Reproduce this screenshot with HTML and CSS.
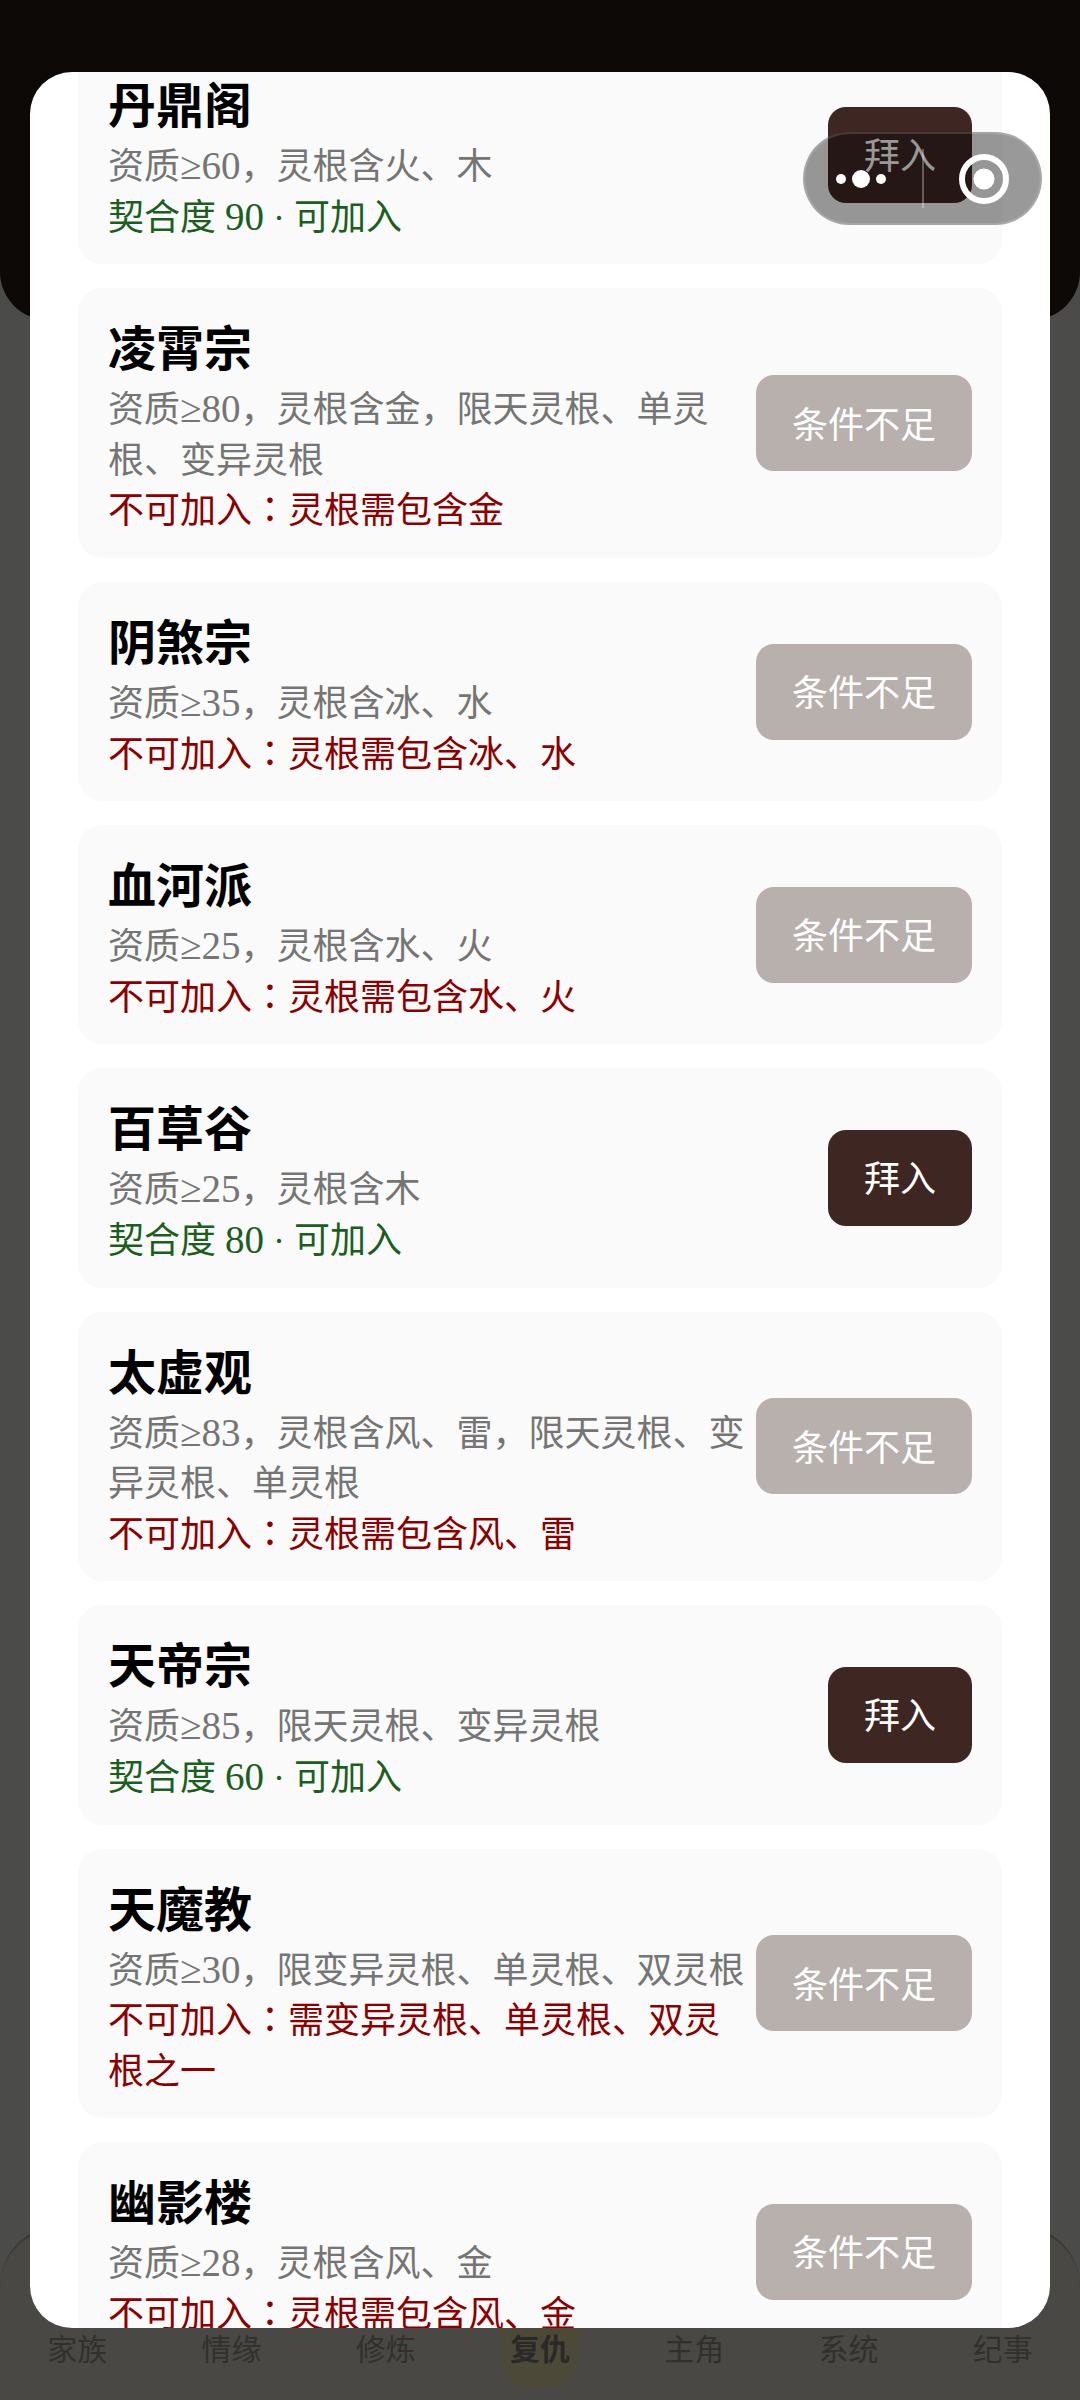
FILE: index.html
```html
<!DOCTYPE html>
<html lang="zh-CN">
<head>
    <meta charset="UTF-8">
    <meta name="viewport" content="width=device-width, initial-scale=1.0">
    <title>拜入宗门</title>
    <link rel="stylesheet" href="styles.css">
</head>
<body>

<div class="app">
    <!-- Top banner behind the dialog -->
    <div class="banner"></div>

    <!-- Bottom tabs behind the dialog -->
    <nav class="tabs">
        <span class="tab">家族</span>
        <span class="tab">情缘</span>
        <span class="tab">修炼</span>
        <span class="tab active">复仇</span>
        <span class="tab">主角</span>
        <span class="tab">系统</span>
        <span class="tab">纪事</span>
    </nav>
</div>

<!-- Sect dialog -->
<div class="scrim">
    <div class="dialog">
        <div class="sect-list">
            <div class="sect">
                <div class="sect-info">
                    <div class="sect-name">丹鼎阁</div>
                    <div class="sect-req">资质<span class="num">≥60</span>，灵根含火、木</div>
                    <div class="sect-status ok">契合度 <span class="num">90</span> · 可加入</div>
                </div>
                <button class="join-btn">拜入</button>
            </div>
            <div class="sect">
                <div class="sect-info">
                    <div class="sect-name">凌霄宗</div>
                    <div class="sect-req">资质<span class="num">≥80</span>，灵根含金，限天灵根、单灵根、变异灵根</div>
                    <div class="sect-status no">不可加入<span class="colon" lang="zh-TW">：</span>灵根需包含金</div>
                </div>
                <button class="join-btn disabled">条件不足</button>
            </div>
            <div class="sect">
                <div class="sect-info">
                    <div class="sect-name">阴煞宗</div>
                    <div class="sect-req">资质<span class="num">≥35</span>，灵根含冰、水</div>
                    <div class="sect-status no">不可加入<span class="colon" lang="zh-TW">：</span>灵根需包含冰、水</div>
                </div>
                <button class="join-btn disabled">条件不足</button>
            </div>
            <div class="sect">
                <div class="sect-info">
                    <div class="sect-name">血河派</div>
                    <div class="sect-req">资质<span class="num">≥25</span>，灵根含水、火</div>
                    <div class="sect-status no">不可加入<span class="colon" lang="zh-TW">：</span>灵根需包含水、火</div>
                </div>
                <button class="join-btn disabled">条件不足</button>
            </div>
            <div class="sect">
                <div class="sect-info">
                    <div class="sect-name">百草谷</div>
                    <div class="sect-req">资质<span class="num">≥25</span>，灵根含木</div>
                    <div class="sect-status ok">契合度 <span class="num">80</span> · 可加入</div>
                </div>
                <button class="join-btn">拜入</button>
            </div>
            <div class="sect">
                <div class="sect-info">
                    <div class="sect-name">太虚观</div>
                    <div class="sect-req">资质<span class="num">≥83</span>，灵根含风、雷，限天灵根、变异灵根、单灵根</div>
                    <div class="sect-status no">不可加入<span class="colon" lang="zh-TW">：</span>灵根需包含风、雷</div>
                </div>
                <button class="join-btn disabled">条件不足</button>
            </div>
            <div class="sect">
                <div class="sect-info">
                    <div class="sect-name">天帝宗</div>
                    <div class="sect-req">资质<span class="num">≥85</span>，限天灵根、变异灵根</div>
                    <div class="sect-status ok">契合度 <span class="num">60</span> · 可加入</div>
                </div>
                <button class="join-btn">拜入</button>
            </div>
            <div class="sect">
                <div class="sect-info">
                    <div class="sect-name">天魔教</div>
                    <div class="sect-req">资质<span class="num">≥30</span>，限变异灵根、单灵根、双灵根</div>
                    <div class="sect-status no">不可加入<span class="colon" lang="zh-TW">：</span>需变异灵根、单灵根、双灵根之一</div>
                </div>
                <button class="join-btn disabled">条件不足</button>
            </div>
            <div class="sect">
                <div class="sect-info">
                    <div class="sect-name">幽影楼</div>
                    <div class="sect-req">资质<span class="num">≥28</span>，灵根含风、金</div>
                    <div class="sect-status no">不可加入<span class="colon" lang="zh-TW">：</span>灵根需包含风、金</div>
                </div>
                <button class="join-btn disabled">条件不足</button>
            </div>
        </div>
    </div>
</div>

<!-- Mini program capsule -->
<div class="capsule">
    <div class="capsule-more">
        <i class="dot"></i>
        <i class="dot big"></i>
        <i class="dot"></i>
    </div>
    <div class="capsule-line"></div>
    <div class="capsule-close">
        <svg width="50" height="50" viewBox="0 0 50 50">
            <circle cx="25" cy="25" r="22" fill="none" stroke="#fff" stroke-width="6"/>
            <circle cx="25" cy="25" r="10.5" fill="#fff"/>
        </svg>
    </div>
</div>

</body>
</html>
```

FILE: styles.css
```css
* {
    box-sizing: border-box;
}

body {
    margin: 0;
    width: 1080px;
    height: 2400px;
    overflow: hidden;
    position: relative;
    font-family: "Liberation Serif", "Noto Sans CJK SC", serif;
    background: #fcfcf8;
}

.app {
    height: 100%;
    display: flex;
    flex-direction: column;
    justify-content: space-between;
}

.banner {
    height: 320px;
    background: #2c1f18;
    border-radius: 0 0 48px 48px;
}

.tabs {
    height: 174px;
    display: flex;
    padding-top: 101px;
    background: #f6f0e6;
    border-top: 3px solid #c6baa4;
    border-radius: 60px 60px 0 0;
}

.tab {
    flex: 1;
    height: 68px;
    text-align: center;
    font-size: 30px;
    line-height: 40px;
    color: #a8a298;
    position: relative;
    z-index: 0;
}

.tab.active {
    font-weight: bold;
    color: #8f8a85;
}

.tab.active::before {
    content: "";
    position: absolute;
    left: 38px;
    top: -30px;
    width: 78px;
    height: 88px;
    border-radius: 0 0 32px 32px;
    background: #fff3c0;
    z-index: -1;
}

.scrim {
    position: absolute;
    top: 0;
    left: 0;
    width: 100%;
    height: 100%;
    padding: 72px 30px;
    background: rgba(0, 0, 0, 0.7);
}

.dialog {
    height: 100%;
    padding: 0 48px;
    overflow: hidden;
    background: #fff;
    border-radius: 42px;
}

.sect-list {
    display: flex;
    flex-direction: column;
    gap: 24px;
    margin-top: -27px;
}

.sect {
    display: flex;
    align-items: center;
    gap: 11px;
    padding: 24px 30px;
    background: #fafafa;
    border-radius: 24px;
}

.sect-info {
    flex: 1;
    min-width: 0;
    padding-top: 3px;
    margin-bottom: -3px;
}

.sect-name {
    font-size: 48px;
    line-height: 70px;
    font-weight: bold;
    color: #000;
}

.sect-req,
.sect-status {
    font-size: 36px;
    line-height: 50.6px;
}

.sect-req {
    color: #757575;
}

.sect-status.ok {
    color: #1b5e20;
}

.sect-status.no {
    color: #8b0000;
}

.num {
    font-size: 39px;
    line-height: 1;
}

.colon {
    font-family: "Noto Sans CJK TC", sans-serif;
    line-height: 1;
}

.join-btn {
    flex: none;
    height: 96px;
    padding: 0 36px 3px;
    border: none;
    border-radius: 18px;
    font-family: inherit;
    font-size: 36px;
    color: #fff;
    background: #3e2723;
}

.join-btn.disabled {
    background: #b7b0ad;
}

.capsule {
    position: absolute;
    left: 803px;
    top: 132px;
    width: 239px;
    height: 93px;
    display: flex;
    align-items: center;
    background: rgba(0, 0, 0, 0.4);
    border: 2px solid rgba(255, 255, 255, 0.15);
    border-radius: 47px;
}

.capsule-more {
    width: 112px;
    margin-right: 5px;
    display: flex;
    align-items: center;
    justify-content: center;
    gap: 6px;
}

.dot {
    width: 10px;
    height: 10px;
    border-radius: 50%;
    background: #fff;
}

.dot.big {
    width: 18px;
    height: 18px;
}

.capsule-line {
    width: 2px;
    height: 59px;
    background: rgba(255, 255, 255, 0.3);
}

.capsule-close {
    flex: 1;
    padding-left: 4px;
    display: flex;
    justify-content: center;
    align-items: center;
}
```
